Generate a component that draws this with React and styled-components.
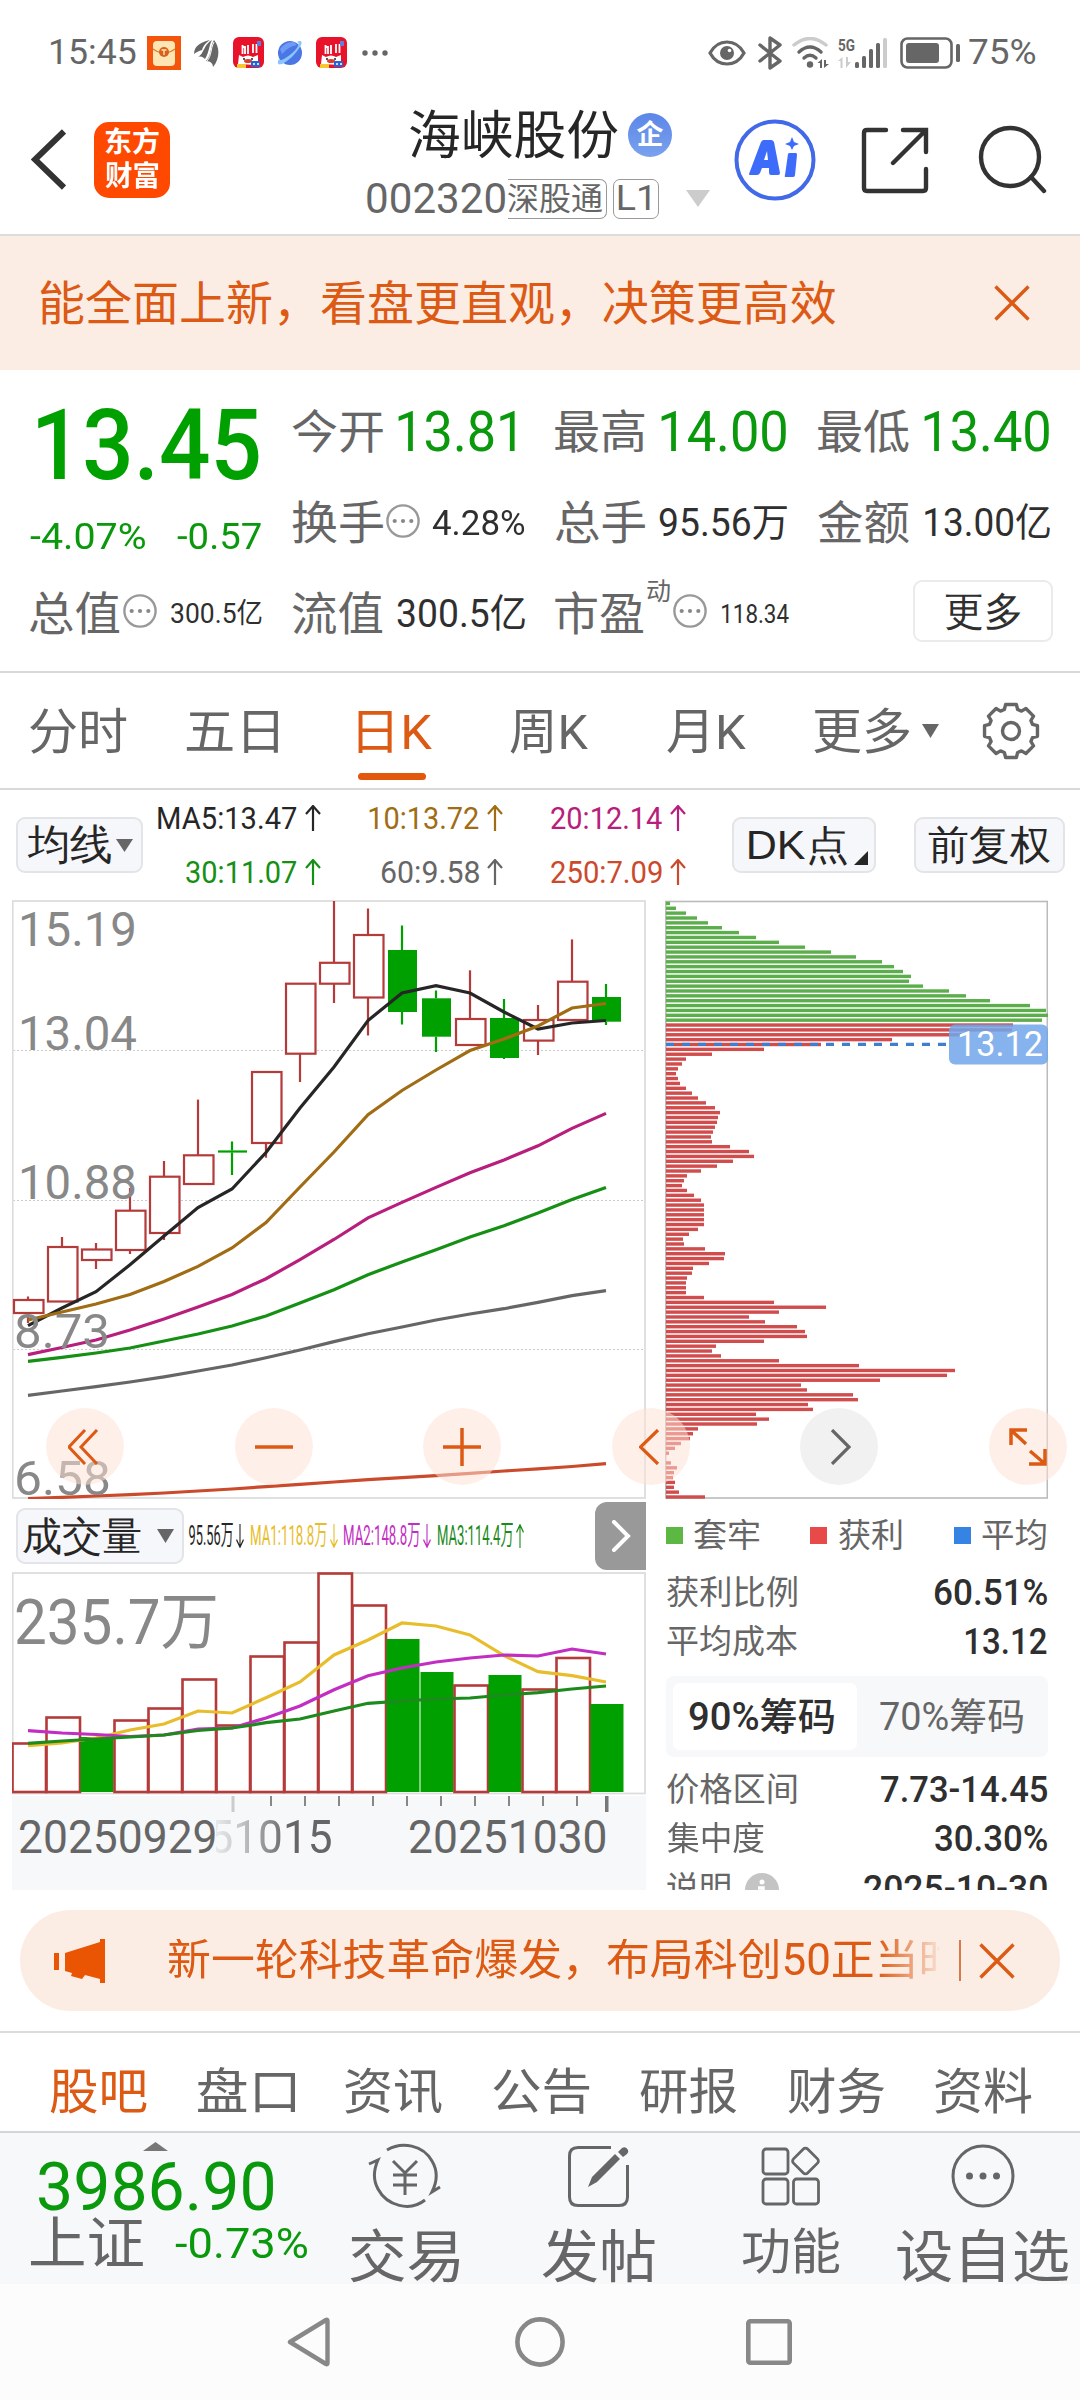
import React from 'react'
import styled, { createGlobalStyle } from 'styled-components'

const FONT = 'Roboto, "Noto Sans CJK SC", sans-serif'

const GREEN = '#0a980c'
const ORANGE = '#dc5a14'
const GRAY = '#666'
const DARK = '#2f2f2f'
const RED = '#b53a3a'

const GlobalStyle = createGlobalStyle`
  * {
    box-sizing: border-box;
  }

  body {
    margin: 0;
    background: #fff;
    font-family: ${FONT};
  }

  svg {
    display: block;
    flex: none;
  }
`

const ctx = document.createElement('canvas').getContext('2d')

const FitBox = styled.span`
  display: block;
  flex: none;
  width: ${props => props.$w}px;
  height: ${props => props.$size}px;
  margin-left: ${props => props.$ml || 0}px;
  margin-top: ${props => props.$mt || 0}px;
  font-size: ${props => props.$size}px;
  font-weight: ${props => props.$weight};
  line-height: ${props => props.$size}px;
  color: ${props => props.$color || GRAY};
  white-space: nowrap;
`

const FitText = styled.span`
  display: inline-block;
  transform-origin: 0 50%;
`

// One line of text squeezed so that its ink fills exactly w pixels
const Fit = ({ w, size, color, weight = 400, ml, mt, children }) => {
  ctx.font = `${weight} ${size}px ${FONT}`
  const m = ctx.measureText(children)
  const scale = w / (m.actualBoundingBoxLeft + m.actualBoundingBoxRight)
  const shift = m.actualBoundingBoxLeft * scale
  return (
    <FitBox $w={w} $size={size} $color={color} $weight={weight} $ml={ml} $mt={mt}>
      <FitText style={{ transform: `translateX(${shift}px) scaleX(${scale})` }}>
        {children}
      </FitText>
    </FitBox>
  )
}

const Screen = styled.div`
  width: 1080px;
  height: 2400px;
  display: flex;
  flex-direction: column;
  overflow: hidden;
  background: #fff;
`

const Row = styled.div`
  display: flex;
  align-items: center;
  flex: none;
  height: ${props => props.$h}px;
`

const Spot = styled.div`
  flex: none;
  margin-left: ${props => props.$ml || 0}px;
  margin-top: ${props => props.$mt || 0}px;
`

/* ---------- status bar ---------- */

const StatusBar = styled.header`
  display: flex;
  align-items: center;
  flex: none;
  height: 105px;
  padding-left: 50px;
`

const Envelope = () => (
  <svg width="34" height="34" viewBox="0 0 34 34">
    <rect width="34" height="34" fill="#f4550c" />
    <rect x="6" y="5" width="22" height="25" rx="4" fill="#fde6b4" />
    <path d="M6 13 Q17 21 28 13" fill="none" stroke="#d9791f" strokeWidth="1.4" />
    <circle cx="17" cy="16" r="5" fill="#d8611c" />
    <path d="M14.5 14h5M17 14v5" stroke="#fde6b4" strokeWidth="1.4" />
  </svg>
)

const Feather = () => (
  <svg width="25" height="28" viewBox="0 0 25 28" fill="#666">
    <path d="M0 15 C0 6 8 3 16 1 C11 4 9 8 8 11 C5 12 2 13 0 15 Z" />
    <path d="M4 18 C10 15 10 5 18 1 C15 6 15 14 11 20 C9 18 7 17 4 18 Z" />
    <path d="M12 22 C18 16 16 7 20 1 C26 8 26 20 19 28 C19 25 17 22 12 22 Z" />
    <path d="M20 3 C16 11 18 16 13 22" fill="none" stroke="#fff" strokeWidth="1" />
  </svg>
)

const SaleApp = () => (
  <svg width="31" height="31" viewBox="0 0 31 31">
    <rect width="31" height="31" rx="6" fill="#e8122a" />
    <path d="M9 10h3v7M9.500 8v9M15 8v9M20 7v9M23.500 7v9" fill="none" stroke="#fff" strokeWidth="1.8" />
    <rect x="24" y="4" width="4" height="5" fill="#5b7fe0" />
    <path d="M5 27 L6 18 L10 20 Q15 17 20 20 L25 18 L25 28 Z" fill="#fff" />
    <circle cx="11" cy="22" r="1" fill="#222" />
    <circle cx="19" cy="22" r="1" fill="#222" />
    <ellipse cx="15" cy="24" rx="4" ry="2" fill="#e03a2a" />
    <rect x="4" y="27" width="9" height="4" fill="#f9c531" />
    <rect x="18" y="24" width="9" height="6" fill="#2763d8" />
    <path d="M20 27h2M24 27h2" stroke="#fff" strokeWidth="1.5" />
  </svg>
)

const Planet = () => (
  <svg width="26" height="26" viewBox="0 0 26 26">
    <circle cx="13" cy="13" r="12" fill="#4a76e6" />
    <path d="M3 9 Q9 1 17 2 L20 5 Q12 6 5 14 Z" fill="#6f9af5" />
    <path
      d="M2 19 C-1 24 2 26 7 23 C14 19 21 11 24 5 C26 1 23 0 20 2 C24 3 20 9 14 14 C9 18 3 22 2 19 Z"
      fill="#8ac5fb"
    />
  </svg>
)

const Dots = () => (
  <svg width="26" height="8" viewBox="0 0 26 8" fill="#666">
    <circle cx="3" cy="4" r="2.7" />
    <circle cx="13" cy="4" r="2.7" />
    <circle cx="23" cy="4" r="2.7" />
  </svg>
)

const Eye = () => (
  <svg width="38" height="26" viewBox="0 0 38 26">
    <path
      d="M2 13 Q8 2 19 2 Q30 2 36 13 Q30 24 19 24 Q8 24 2 13 Z"
      fill="none"
      stroke="#666"
      strokeWidth="3.2"
    />
    <circle cx="19" cy="13" r="7" fill="#666" />
    <circle cx="21.5" cy="10.5" r="1.8" fill="#fff" />
  </svg>
)

const Bluetooth = () => (
  <svg width="25" height="34" viewBox="0 0 25 34">
    <path
      d="M2 9 L22 25 L12 32 V2 L22 9 L2 25"
      fill="none"
      stroke="#666"
      strokeWidth="3.4"
      strokeLinejoin="round"
      strokeLinecap="round"
    />
  </svg>
)

const Wifi = () => (
  <svg width="38" height="32" viewBox="0 0 38 32">
    <g fill="none" strokeWidth="3.4" strokeLinecap="round">
      <path d="M2 8 Q18 -5 34 8" stroke="#ccc" />
      <path d="M7 15 Q18 5 29 15" stroke="#666" />
      <path d="M12 21 Q18 15.5 24 21" stroke="#666" />
    </g>
    <circle cx="18" cy="27.5" r="3.2" fill="#666" />
    <path d="M25.5 26 L30 22 V31 H28 V26 Z M32 23 V31 L37 27 H34 V23 Z" fill="#666" />
  </svg>
)

const Signal = () => (
  <svg width="52" height="32" viewBox="0 0 52 32">
    <text x="1" y="13.5" fontSize="17" fontWeight="700" fill="#666" textLength="17" lengthAdjust="spacingAndGlyphs">
      5G
    </text>
    <path d="M1 24 L5.5 20 V31 H3.5 V24 Z M9 20 V31 L14 25 H11 V20 Z" fill="#ccc" />
    <g fill="#666">
      <rect x="18" y="25" width="4" height="6" rx="1.5" />
      <rect x="25" y="19" width="4" height="12" rx="1.5" />
      <rect x="32" y="12" width="4" height="19" rx="1.5" />
      <rect x="39" y="6" width="4" height="25" rx="1.5" />
    </g>
    <rect x="46" y="1" width="4" height="30" rx="1.5" fill="#ccc" />
  </svg>
)

const Battery = () => (
  <svg width="60" height="32" viewBox="0 0 60 32">
    <rect x="1.5" y="1.5" width="50" height="29" rx="6" fill="none" stroke="#666" strokeWidth="2.6" />
    <rect x="6" y="6" width="33" height="20" rx="3" fill="#666" />
    <rect x="56" y="7" width="4" height="18" rx="1.5" fill="#666" />
  </svg>
)

/* ---------- title bar ---------- */

const TitleBar = styled.header`
  display: flex;
  flex: none;
  height: 131px;
  border-bottom: 2px solid #dcdcdc;
`

const AppLogo = styled.div`
  width: 76px;
  height: 76px;
  margin: 17px 0 0 28px;
  padding-top: 7px;
  border-radius: 15px;
  background: #ff4800;
  flex: none;
  display: flex;
  flex-direction: column;
  align-items: center;
  gap: 6px;
`

const TitleBlock = styled.div`
  flex: none;
  width: 345px;
  margin-left: 197px;
`

const Badge = styled.div`
  width: 44px;
  height: 44px;
  margin-left: 10px;
  border-radius: 50%;
  background: linear-gradient(#5b86e8, #7aa2ee);
  display: flex;
  align-items: center;
  justify-content: center;
`

const Tag = styled.div`
  height: 40px;
  width: ${props => props.$w}px;
  margin-left: ${props => props.$ml}px;
  border: 1.5px solid #999;
  border-radius: ${props => (props.$open ? '0 7px 7px 0' : '7px')};
  border-left-width: ${props => (props.$open ? 0 : '1.5px')};
  display: flex;
  align-items: center;
  flex: none;
`

/* ---------- orange strip ---------- */

const Promo = styled.section`
  display: flex;
  align-items: center;
  flex: none;
  height: 134px;
  padding-left: 40px;
  background: #fcede4;
`

const Cross = () => (
  <svg width="36" height="36" viewBox="0 0 36 36">
    <path d="M1.5 1.5 L34.5 34.5 M34.5 1.5 L1.5 34.5" stroke={ORANGE} strokeWidth="3.4" />
  </svg>
)

/* ---------- quote ---------- */

const Quote = styled.section`
  display: grid;
  grid-template-columns: 263px 263px 263px 291px;
  grid-template-rows: 122px 91px 90px;
  flex: none;
  height: 303px;
  border-bottom: 2px solid #d8d8d8;
`

const PriceCell = styled.div`
  grid-row: 1 / 3;
  padding-left: 30px;
`

const Cell = styled.div`
  display: flex;
  padding-left: 29px;
  padding-top: ${props => props.$pt}px;
  height: ${props => props.$pt + 46}px;
  align-items: center;
`

const MoreButton = styled.button`
  width: 140px;
  height: 62px;
  margin-left: 124px;
  margin-top: -3px;
  padding: 0 0 0 31px;
  border: 2px solid #ebebeb;
  border-radius: 9px;
  background: #fff;
  display: flex;
  align-items: center;
`

const Info = () => (
  <svg width="34" height="34" viewBox="0 0 34 34">
    <circle cx="17" cy="17" r="15.6" fill="none" stroke="#999" strokeWidth="2.4" />
    <g fill="#888">
      <circle cx="8.7" cy="17" r="2.1" />
      <circle cx="17" cy="17" r="2.1" />
      <circle cx="25.3" cy="17" r="2.1" />
    </g>
  </svg>
)

/* ---------- period tabs ---------- */

const PeriodTabs = styled.nav`
  display: flex;
  flex: none;
  height: 117px;
  padding: 35px 0 0 30px;
  border-bottom: 2px solid #d8d8d8;
`

const PeriodTab = styled.div`
  flex: none;
  margin-left: ${props => props.$ml || 0}px;

  &::after {
    content: '';
    display: block;
    width: 68px;
    height: 7px;
    margin-top: 16px;
    border-radius: 4px;
    background: ${props => (props.$active ? '#e2570b' : 'transparent')};
  }
`

const Caret = ({ w = 17, h = 13, color = '#666' }) => (
  <svg width={w} height={h} viewBox="0 0 17 13" preserveAspectRatio="none">
    <path d="M0 0 H17 L8.5 13 Z" fill={color} />
  </svg>
)

const Gear = () => {
  const teeth = []
  for (let i = 0; i < 8; i++) {
    const a = (i * Math.PI) / 4
    ;[[-0.3, 22.5], [-0.2, 27], [0.2, 27], [0.3, 22.5]].forEach(([d, r]) => {
      teeth.push(`${29 + r * Math.sin(a + d)},${29 - r * Math.cos(a + d)}`)
    })
  }
  return (
    <svg width="58" height="58" viewBox="0 0 58 58" fill="none" stroke="#666" strokeWidth="3.4">
      <polygon points={teeth.join(' ')} strokeLinejoin="round" />
      <circle cx="29" cy="29" r="8.5" />
    </svg>
  )
}

/* ---------- indicators ---------- */

const Indicators = styled.section`
  display: flex;
  flex: none;
  height: 110px;
  padding-left: 16px;
`

const Chip = styled.button`
  display: flex;
  align-items: center;
  flex: none;
  width: ${props => props.$w}px;
  height: 56px;
  margin: ${props => props.$mt}px 0 0 ${props => props.$ml || 0}px;
  padding: 0 0 0 ${props => props.$pl}px;
  border: 2px solid #e3e4e8;
  border-radius: 9px;
  background: #f6f7fa;
`

const MaGrid = styled.div`
  display: grid;
  grid-template-columns: 163px 182px 200px;
  grid-template-rows: 54px 54px;
  width: 545px;
  margin-left: 15px;
  padding-top: 1px;
`

const MaCell = styled.div`
  display: flex;
  align-items: center;
  justify-content: flex-end;
  padding-right: ${props => props.$pr}px;
  gap: 8px;
`

const Arrow = ({ down, color, w = 16, h = 26 }) => (
  <svg width={w} height={h} viewBox="0 0 16 26" preserveAspectRatio="none">
    <path
      d={down ? 'M8 0 V25 M1 17 L8 25 L15 17' : 'M8 26 V1 M1 9 L8 1 L15 9'}
      fill="none"
      stroke={color}
      strokeWidth="2.2"
    />
  </svg>
)

const averages = [
  { text: 'MA5:13.47', w: 139, color: '#262626', pr: 0 },
  { text: '10:13.72', w: 110, color: '#a06c14', pr: 0 },
  { text: '20:12.14', w: 111, color: '#b81e7c', pr: 17 },
  { text: '30:11.07', w: 111, color: '#159015', pr: 0 },
  { text: '60:9.58', w: 97, color: '#666', pr: 0 },
  { text: '250:7.09', w: 111, color: '#cc4a2c', pr: 17 }
]

/* ---------- charts ---------- */

const ChartArea = styled.section`
  position: relative;
  display: flex;
  flex: none;
  height: 990px;
  padding-left: 12px;
  overflow: hidden;
`

const LeftPane = styled.div`
  width: 634px;
  flex: none;
`

const RightPane = styled.div`
  width: 383px;
  margin-left: 19px;
  flex: none;
`

const Controls = styled.div`
  position: absolute;
  left: 46px;
  top: 508px;
  width: 1021px;
  display: flex;
  justify-content: space-between;
`

const RoundButton = styled.div`
  width: 78px;
  height: 77px;
  border-radius: 50%;
  background: ${props => (props.$gray ? 'rgba(238,238,238,.8)' : 'rgba(253,226,212,.52)')};
  display: flex;
  align-items: center;
  justify-content: center;
`

const STEP = 34
const xs = Array.from({ length: 18 }, (_, i) => 28 + i * STEP)

// [up, high, top, bottom, low]
const candles = [
  [1, 1296.5, 1300, 1313, 1323],
  [1, 1237, 1247, 1301.5, 1301.5],
  [1, 1243, 1249.5, 1260, 1269],
  [1, 1188, 1210.7, 1250, 1254],
  [1, 1161, 1176.7, 1233, 1240],
  [1, 1099.6, 1155.3, 1184, 1184],
  [0, 1141.5, 1150.4, 1152.6, 1175],
  [1, 1072, 1072, 1143, 1157.7],
  [1, 983.7, 983.7, 1053.7, 1082],
  [1, 901, 962.8, 983.7, 1003],
  [1, 908.6, 935, 997.5, 1035.5],
  [0, 925.6, 950, 1012, 1024.4],
  [0, 990.4, 998.3, 1036.7, 1052],
  [1, 970.3, 1019, 1045, 1045],
  [0, 999, 1018, 1058, 1059],
  [1, 1005, 1020, 1040.6, 1055],
  [1, 939.4, 981.7, 1020, 1020],
  [0, 984, 997, 1021.7, 1025]
]

const priceLines = [
  ['#666', [1395.3, 1391, 1386.6, 1382, 1376.8, 1371, 1365, 1357.8, 1350, 1341.6, 1333.7, 1327, 1320, 1314, 1308.7, 1302.4, 1295.7, 1290.6]],
  ['#cc4a2c', [1498.5, 1497.4, 1496, 1494.6, 1493, 1491, 1489, 1486.6, 1484.3, 1482, 1479.6, 1477.6, 1475.6, 1473.4, 1471, 1468.8, 1466.5, 1463.7]],
  ['#159015', [1361.3, 1357.4, 1353, 1348, 1341, 1334, 1326, 1316, 1303, 1289.8, 1274.7, 1262, 1249.8, 1237, 1225.7, 1213, 1199.6, 1187.4]],
  ['#b81e7c', [1354.6, 1347.5, 1340, 1330, 1319, 1307, 1294.5, 1278.7, 1259.7, 1239.5, 1217.8, 1202.4, 1187.4, 1172.7, 1160, 1145.8, 1128.4, 1113.4]],
  ['#262626', [1325.7, 1308, 1291.7, 1264.8, 1236, 1207.5, 1189, 1152.5, 1108, 1067, 1020.5, 993, 985.7, 993, 1012, 1029, 1023, 1020.5]],
  ['#a06c14', [1320, 1312, 1304, 1294.5, 1281.5, 1266.4, 1248, 1222.5, 1187, 1152, 1114.6, 1090.5, 1070, 1050.5, 1039, 1026, 1008, 1003.5]]
]

const priceLabels = [
  ['15.19', 18, 946, 116],
  ['13.04', 18, 1049.5, 116],
  ['10.88', 18, 1199, 116],
  ['8.73', 14, 1348, 93],
  ['6.58', 14, 1494.5, 94]
]

const points = ys => ys.map((y, i) => `${xs[i]},${y}`).join(' ')

const PriceChart = () => (
  <svg width="634" height="599" viewBox="12 900 634 599">
    <g stroke="#ccc" strokeDasharray="2 2">
      <path d="M13 1050.5H645M13 1200.5H645M13 1349.5H645" />
    </g>
    <rect x="12.7" y="901" width="632.3" height="597" fill="none" stroke="#ddd" strokeWidth="1.8" />
    {candles.map(([up, high, top, bottom, low], i) => {
      const color = up ? RED : '#00a000'
      return (
        <g key={i} stroke={color} strokeWidth="2.2">
          <path d={`M${xs[i]} ${high}V${top}M${xs[i]} ${bottom}V${low}`} />
          {up ? (
            <rect x={xs[i] - 14} y={top} width="29.5" height={bottom - top} fill="#fff" />
          ) : (
            <rect x={xs[i] - 14} y={top} width="29" height={bottom - top} fill={color} stroke="none" />
          )}
        </g>
      )
    })}
    {priceLines.map(([color, ys]) => (
      <polyline key={color} points={points(ys)} fill="none" stroke={color} strokeWidth="3.2" />
    ))}
    {priceLabels.map(([text, x, y, w]) => (
      <text key={text} x={x} y={y} fontSize="48.5" fill="#888" textLength={w + 3} lengthAdjust="spacingAndGlyphs">
        {text}
      </text>
    ))}
  </svg>
)

// [up, top]
const volumes = [
  [1, 1743], [1, 1717], [0, 1737], [1, 1720], [1, 1708], [1, 1679],
  [1, 1725], [1, 1656], [1, 1642], [1, 1573], [1, 1605], [0, 1639],
  [0, 1672], [1, 1685], [0, 1675], [1, 1689], [1, 1657.5], [0, 1704]
]

const volumeLines = [
  ['#e8bd2b', [1745.7, 1743, 1738, 1730, 1724, 1711, 1713, 1697.7, 1682, 1655, 1640, 1623, 1626, 1635, 1655.7, 1671.7, 1675.7, 1682]],
  ['#c22ec2', [1730.7, 1733, 1734.5, 1736.5, 1735, 1729, 1728, 1718, 1706, 1689.7, 1675.7, 1668, 1662, 1658, 1655, 1656, 1649, 1654]],
  ['#1d8a1d', [1743.3, 1741, 1739, 1737, 1735, 1730.5, 1728, 1722.7, 1719, 1711, 1703.3, 1701, 1699, 1698, 1695, 1692.7, 1689, 1686]]
]

const VolumeChart = () => (
  <svg width="634" height="224" viewBox="12 1572 634 224">
    <rect x="12.7" y="1573" width="632.3" height="220.5" fill="none" stroke="#ddd" strokeWidth="1.8" />
    <text x="14" y="1643.5" fontSize="62.5" fill="#888" textLength="205" lengthAdjust="spacingAndGlyphs">
      235.7万
    </text>
    {volumes.map(([up, top], i) =>
      up ? (
        <rect
          key={i}
          x={12.5 + i * STEP}
          y={top + 0.5}
          width="33.5"
          height={1791.5 - top}
          fill="none"
          stroke={RED}
          strokeWidth="2.6"
        />
      ) : (
        <rect key={i} x={12.5 + i * STEP} y={top} width="33" height={1792 - top} fill="#00a000" />
      )
    )}
    {volumeLines.map(([color, ys]) => (
      <polyline key={color} points={points(ys)} fill="none" stroke={color} strokeWidth="3.2" />
    ))}
  </svg>
)

const volumeMas = [
  { text: '95.56万', w: 44, color: '#262626', down: true, ml: 5 },
  { text: 'MA1:118.8万', w: 76, color: '#e8bd2b', down: true, ml: 7 },
  { text: 'MA2:148.8万', w: 76, color: '#c22ec2', down: true, ml: 6 },
  { text: 'MA3:114.4万', w: 75, color: '#1d8a1d', down: false, ml: 7 }
]

const VolumeBar = styled.div`
  display: flex;
  align-items: center;
  height: 73px;
`

const FoldButton = styled.div`
  width: 51px;
  height: 68px;
  margin-left: auto;
  border-radius: 12px 0 0 12px;
  background: #999;
  display: flex;
  align-items: center;
  justify-content: center;
`

const Axis = styled.div`
  height: 94px;
  background: #f7f8fa;
`

const Dates = styled.div`
  display: flex;
  padding: 1px 0 0 8px;
`

// second date starts underneath the first one and fades in
const FadingDate = styled.div`
  display: flex;
  justify-content: flex-end;
  width: 115px;
  margin-left: 1px;
  overflow: hidden;
  mask-image: linear-gradient(to right, rgba(0, 0, 0, 0.1), rgba(0, 0, 0, 0.35) 22%, #000 62%);
`

const Ticks = () => (
  <svg width="634" height="18" viewBox="12 1796 634 18">
    <rect x="231.5" y="1796" width="3" height="16" fill="#ccc" />
    {xs.slice(7, 17).map(x => (
      <rect key={x} x={x + 4} y="1796" width="2" height="10" fill="#888" />
    ))}
    <rect x="605" y="1796" width="3.5" height="16" fill="#777" />
  </svg>
)

const trapped = [
  4, 10, 20, 31, 42, 56, 73, 90, 113, 139, 165, 190, 216, 228, 237, 245, 243, 257, 283, 300, 324, 364, 380,
  382, 376
]

const profit = [
  347, 346, 296, 226, 155, 98, 46, 20, 16, 12, 10, 12, 14, 20, 26, 32, 40, 49, 54, 52, 51, 49, 47, 45, 46, 64,
  83, 88, 67, 51, 35, 21, 18, 16, 21, 28, 35, 38, 38, 38, 38, 38, 32, 23, 17, 18, 39, 59, 58, 43, 27, 26, 21,
  20, 20, 20, 38, 108, 160, 113, 83, 99, 131, 139, 141, 98, 50, 46, 55, 113, 193, 289, 281, 214, 135, 141,
  187, 192, 142, 147, 90, 103, 91, 32, 27, 24, 15, 9, 3, 0, 5, 11, 8, 7, 9, 8, 13, 39
]

const ChipChart = () => {
  const all = trapped.concat(profit)
  const gap = 593.6 / (all.length - 1)
  return (
    <svg width="383" height="599" viewBox="665 900 383 599">
      <rect x="665.7" y="901.5" width="381.6" height="596.5" fill="none" stroke="#bbb" strokeWidth="1.6" />
      {all.map((w, i) => (
        <rect
          key={i}
          x="666"
          y={903.4 + i * gap - 1.7}
          width={w}
          height="3.4"
          fill={i < trapped.length ? '#5cae4c' : '#d14c4c'}
        />
      ))}
      <path d="M666 1044.4H948" stroke="#3f7fcf" strokeWidth="3.2" strokeDasharray="8 8" />
      <rect x="949" y="1024.5" width="99" height="40" rx="6" fill="#72a6ea" fillOpacity=".86" />
      <text x="957" y="1055.5" fontSize="35" fill="#fff" textLength="86" lengthAdjust="spacingAndGlyphs">
        13.12
      </text>
    </svg>
  )
}

const Legend = styled.div`
  display: flex;
  align-items: center;
  height: 69px;
  padding-top: 4px;
`

const Square = styled.i`
  width: 17px;
  height: 17px;
  flex: none;
  margin-left: ${props => props.$ml || 0}px;
  background: ${props => props.$color};
`

const StatRow = styled.div`
  display: flex;
  align-items: center;
  justify-content: space-between;
  height: 49px;
  padding: 0 1px 0 2px;
`

const Segment = styled.div`
  display: flex;
  align-items: center;
  height: 81px;
  width: 382px;
  margin: 10px 0 8px 1px;
  padding-left: 7px;
  border-radius: 8px;
  background: #f7f8fa;
`

const SegmentActive = styled.div`
  width: 184px;
  height: 67px;
  padding-left: 16px;
  border-radius: 7px;
  background: #fff;
  display: flex;
  align-items: center;
`

/* ---------- news strip ---------- */

const Notice = styled.section`
  display: flex;
  align-items: center;
  flex: none;
  width: 1040px;
  height: 101px;
  margin: 20px 0 20px 20px;
  padding-left: 34px;
  border-radius: 51px;
  background: #fcede4;
`

const NoticeText = styled.div`
  width: 771px;
  margin-left: 62px;
  overflow: hidden;
  mask-image: linear-gradient(to right, #000 92%, rgba(0, 0, 0, 0.1));
`

const Divider = styled.i`
  width: 1.5px;
  height: 41px;
  margin: 0 18.5px 0 20px;
  background: #d87a48;
`

/* ---------- bottom ---------- */

const InfoTabs = styled.nav`
  display: flex;
  align-items: center;
  flex: none;
  gap: 50.5px;
  height: 102px;
  padding: 20px 0 0 50px;
  border-top: 2px solid #dadcde;
  border-bottom: 2px solid #d3d6d9;
`

const BottomBar = styled.footer`
  display: flex;
  flex: none;
  height: 151px;
  background: #f6f8fa;
`

const IndexBlock = styled.div`
  width: 309px;
  flex: none;
  padding: 9px 0 0 30px;
`

const Action = styled.div`
  width: 192.7px;
  flex: none;
  display: flex;
  flex-direction: column;
  align-items: center;
  padding-top: 9px;
`

const SystemNav = styled.footer`
  display: flex;
  align-items: center;
  flex: none;
  height: 116px;
  padding-left: 287px;
  background: #fcfcfc;
`

const TradeIcon = () => (
  <svg width="74" height="68" viewBox="0 0 74 68" fill="none" stroke="#666" strokeWidth="3">
    <path d="M19 8 C34 -1 55 3 64 19 C70 29 69 40 64 50 L72 45" />
    <path d="M57 58 C42 70 19 64 10 47 C5 38 6 27 10 18 L1 22" />
    <path d="M25 19 L37 31 L49 19 M25 33 H49 M25 43 H49 M37 31 V53" />
  </svg>
)

const PostIcon = () => (
  <svg width="61" height="68" viewBox="0 0 61 68">
    <path
      d="M43 5.5 H10 Q1.5 5.5 1.5 14 V55 Q1.5 63.500 10 63.500 H51 Q59.500 63.500 59.500 55 V23"
      fill="none"
      stroke="#666"
      strokeWidth="3"
    />
    <path d="M20 45 L24 35 L47 12 L52 17 L29 40 Z" fill="#666" />
    <path d="M50 10 L54 6 Q58 4 60 8 Q61 10 59 12 L55 15 Z" fill="#666" />
  </svg>
)

const FunctionIcon = () => (
  <svg width="60" height="68" viewBox="0 0 60 68" fill="none" stroke="#666" strokeWidth="2.8">
    <rect x="2" y="7" width="25" height="25" rx="3" />
    <rect x="2" y="37" width="25" height="25" rx="3" />
    <rect x="32.500" y="37" width="25" height="25" rx="3" />
    <rect x="34.500" y="9" width="20" height="20" rx="3" transform="rotate(45 44.500 19)" />
  </svg>
)

const AddIcon = () => (
  <svg width="64" height="68" viewBox="0 0 64 68">
    <circle cx="32" cy="34" r="30" fill="none" stroke="#666" strokeWidth="3" />
    <g fill="#666">
      <circle cx="18.500" cy="34" r="3.500" />
      <circle cx="32" cy="34" r="3.500" />
      <circle cx="45.500" cy="34" r="3.500" />
    </g>
  </svg>
)

const infoTabs = ['股吧', '盘口', '资讯', '公告', '研报', '财务', '资料']

export default () => {
  return (
    <Screen>
      <GlobalStyle />
      <StatusBar>
        <Fit w={86} size={35}>15:45</Fit>
        <Spot $ml={11}><Envelope /></Spot>
        <Spot $ml={13}><Feather /></Spot>
        <Spot $ml={14}><SaleApp /></Spot>
        <Spot $ml={13}><Planet /></Spot>
        <Spot $ml={13}><SaleApp /></Spot>
        <Spot $ml={15}><Dots /></Spot>
        <Spot $ml={320}><Eye /></Spot>
        <Spot $ml={12}><Bluetooth /></Spot>
        <Spot $ml={9}><Wifi /></Spot>
        <Spot $ml={7}><Signal /></Spot>
        <Spot $ml={11}><Battery /></Spot>
        <Fit w={67} size={35} ml={9}>75%</Fit>
      </StatusBar>

      <TitleBar>
        <Spot $ml={31} $mt={24}>
          <svg width="35" height="61" viewBox="0 0 35 61">
            <path d="M33 2.500 L4 30.500 L33 58.500" fill="none" stroke="#333" strokeWidth="6" />
          </svg>
        </Spot>
        <AppLogo>
          <Fit w={54} size={28} color="#fff" weight={700}>东方</Fit>
          <Fit w={54} size={28} color="#fff" weight={700}>财富</Fit>
        </AppLogo>
        <TitleBlock>
          <Row $h={60}>
            <Fit w={208} size={52} color="#262626" ml={43} mt={3}>海峡股份</Fit>
            <Badge>
              <Fit w={27} size={27} color="#fff" weight={700}>企</Fit>
            </Badge>
          </Row>
          <Row $h={67}>
            <Fit w={138} size={43} mt={-1}>002320</Fit>
            <Tag $w={99} $ml={3} $open>
              <Fit w={94} size={32}>深股通</Fit>
            </Tag>
            <Tag $w={46} $ml={6}>
              <Fit w={32} size={35} ml={4}>L1</Fit>
            </Tag>
            <Spot $ml={27}><Caret w={24} h={17} color="#ccc" /></Spot>
          </Row>
        </TitleBlock>
        <Spot $ml={22} $mt={13}>
          <svg width="82" height="84" viewBox="0 0 82 84">
            <circle cx="41" cy="42" r="38.500" fill="none" stroke="#4169e8" strokeWidth="4" />
            <path
              fillRule="evenodd"
              d="M15 56 L27 24 Q28 22 30 22 H37 Q39 22 40 24 L46 55 Q46 57 44 57 H37 Q35 57 35 54 V50 H28 L26 55 Q25 57 23 57 H16 Q15 57 15 56 Z M30 42 H34 L33 33 Z"
              fill="#3d6bfa"
            />
            <path d="M54 36 Q54 35 56 35 H62 Q63 35 63 37 L61 57 Q61 59 59 59 H52 Q50 59 51 57 Z" fill="#3d6bfa" />
            <path d="M58 19 L60 24 L65 26 L60 28 L58 32 L56 28 L51 26 L56 24 Z" fill="#3d6bfa" />
          </svg>
        </Spot>
        <Spot $ml={45} $mt={21}>
          <svg width="68" height="68" viewBox="0 0 68 68" fill="none" stroke="#333" strokeWidth="4.400" strokeLinecap="round">
            <path d="M25 4 H6 Q3 4 3 7 V62 Q3 65 6 65 H62 Q65 65 65 62 V43" />
            <path d="M42 4 H65 V26 M65 4 L32 37" />
          </svg>
        </Spot>
        <Spot $ml={49} $mt={19}>
          <svg width="70" height="70" viewBox="0 0 70 70" fill="none" stroke="#333" strokeWidth="4.400" strokeLinecap="round">
            <circle cx="32" cy="33" r="29" />
            <path d="M53 53 L66 67" />
          </svg>
        </Spot>
      </TitleBar>

      <Promo>
        <Fit w={796} size={46.8} color={ORANGE} mt={3}>能全面上新，看盘更直观，决策更高效</Fit>
        <Spot $ml={158}><Cross /></Spot>
      </Promo>

      <Quote>
        <PriceCell>
          <Row $h={149}>
            <Fit w={221} size={99} color="#00a000" weight={500} ml={8} mt={2}>13.45</Fit>
          </Row>
          <Row $h={36}>
            <Fit w={115} size={36} color={GREEN}>-4.07%</Fit>
            <Fit w={84} size={36} color={GREEN} ml={32}>-0.57</Fit>
          </Row>
        </PriceCell>
        <Cell $pt={39}>
          <Fit w={91} size={46}>今开</Fit>
          <Fit w={117} size={55} color={GREEN} ml={15}>13.81</Fit>
        </Cell>
        <Cell $pt={39}>
          <Fit w={90} size={46}>最高</Fit>
          <Fit w={125} size={55} color={GREEN} ml={16}>14.00</Fit>
        </Cell>
        <Cell $pt={39}>
          <Fit w={91} size={46}>最低</Fit>
          <Fit w={125} size={55} color={GREEN} ml={15}>13.40</Fit>
        </Cell>
        <Cell $pt={8}>
          <Fit w={91} size={46}>换手</Fit>
          <Spot $ml={3} $mt={-4}><Info /></Spot>
          <Fit w={93} size={35} color={DARK} ml={12}>4.28%</Fit>
        </Cell>
        <Cell $pt={8}>
          <Fit w={90} size={46}>总手</Fit>
          <Fit w={128} size={39} color={DARK} ml={14}>95.56万</Fit>
        </Cell>
        <Cell $pt={8}>
          <Fit w={91} size={46}>金额</Fit>
          <Fit w={125} size={39} color={DARK} ml={16}>13.00亿</Fit>
        </Cell>
        <Cell $pt={8}>
          <Fit w={91} size={46}>总值</Fit>
          <Spot $ml={3} $mt={-6}><Info /></Spot>
          <Fit w={91} size={28} color={DARK} ml={14}>300.5亿</Fit>
        </Cell>
        <Cell $pt={8}>
          <Fit w={91} size={46}>流值</Fit>
          <Fit w={128} size={39} color={DARK} ml={14}>300.5亿</Fit>
        </Cell>
        <Cell $pt={8}>
          <Fit w={88} size={46}>市盈</Fit>
          <Fit w={23} size={25} ml={4} mt={-46}>动</Fit>
          <Spot $ml={3} $mt={-6}><Info /></Spot>
          <Fit w={67} size={25} color={DARK} ml={15}>118.34</Fit>
        </Cell>
        <div>
          <MoreButton>
            <Fit w={77} size={40} color={DARK} ml={-1}>更多</Fit>
          </MoreButton>
        </div>
      </Quote>

      <PeriodTabs>
        <PeriodTab><Fit w={97} size={49}>分时</Fit></PeriodTab>
        <PeriodTab $ml={59}><Fit w={92} size={49}>五日</Fit></PeriodTab>
        <PeriodTab $ml={80} $active><Fit w={74} size={49} color={ORANGE}>日K</Fit></PeriodTab>
        <PeriodTab $ml={78}><Fit w={78} size={49}>周K</Fit></PeriodTab>
        <PeriodTab $ml={79}><Fit w={79} size={49}>月K</Fit></PeriodTab>
        <PeriodTab $ml={68}><Fit w={96} size={49}>更多</Fit></PeriodTab>
        <Spot $ml={12} $mt={16}><Caret w={17} h={14} /></Spot>
        <Spot $ml={43} $mt={-6}><Gear /></Spot>
      </PeriodTabs>

      <Indicators>
        <Chip $w={127} $mt={27} $pl={11}>
          <Fit w={83} size={42} color="#262626">均线</Fit>
          <Spot $ml={4}><Caret /></Spot>
        </Chip>
        <MaGrid>
          {averages.map(({ text, w, color, pr }) => (
            <MaCell key={text} $pr={pr}>
              <Fit w={w} size={31} color={color}>{text}</Fit>
              <Arrow color={color} />
            </MaCell>
          ))}
        </MaGrid>
        <Chip $w={144} $mt={27} $ml={29} $pl={15}>
          <Fit w={94} size={40} color="#262626">DK点</Fit>
          <Spot $ml={11} $mt={26}>
            <svg width="14" height="14" viewBox="0 0 14 14">
              <path d="M14 0 V14 H0 Z" fill="#262626" />
            </svg>
          </Spot>
        </Chip>
        <Chip $w={151} $mt={27} $ml={38} $pl={14}>
          <Fit w={120} size={41} color="#262626">前复权</Fit>
        </Chip>
      </Indicators>

      <ChartArea>
        <LeftPane>
          <PriceChart />
          <VolumeBar>
            <Chip $w={168} $mt={0} $ml={4} $pl={5}>
              <Fit w={118} size={40} color="#262626">成交量</Fit>
              <Spot $ml={16}><Caret w={17} h={14} /></Spot>
            </Chip>
            {volumeMas.map(({ text, w, color, down, ml }) => (
              <React.Fragment key={text}>
                <Fit w={w} size={28} color={color} ml={ml}>{text}</Fit>
                <Spot $ml={3}><Arrow color={color} down={down} w={8} h={24} /></Spot>
              </React.Fragment>
            ))}
            <FoldButton>
              <svg width="20" height="32" viewBox="0 0 20 32">
                <path d="M3 2 L17 16 L3 30" fill="none" stroke="#fff" strokeWidth="4" strokeLinecap="round" />
              </svg>
            </FoldButton>
          </VolumeBar>
          <VolumeChart />
          <Axis>
            <Ticks />
            <Dates>
              <Fit w={195} size={45.500}>20250929</Fit>
              <FadingDate>
                <Fit w={195} size={45.500}>20251015</Fit>
              </FadingDate>
              <Fit w={195} size={45.500} ml={79}>20251030</Fit>
            </Dates>
          </Axis>
        </LeftPane>

        <RightPane>
          <ChipChart />
          <Legend>
            <Square $color="#5cb843" $ml={1} />
            <Fit w={65} size={33} ml={11}>套牢</Fit>
            <Square $color="#e84a4a" $ml={51} />
            <Fit w={63} size={33} ml={12}>获利</Fit>
            <Square $color="#3583e3" $ml={52} />
            <Fit w={64} size={33} ml={11}>平均</Fit>
          </Legend>
          <StatRow>
            <Fit w={130} size={33}>获利比例</Fit>
            <Fit w={112} size={36} color={DARK} weight={500}>60.51%</Fit>
          </StatRow>
          <StatRow>
            <Fit w={130} size={33}>平均成本</Fit>
            <Fit w={82} size={36} color={DARK} weight={500}>13.12</Fit>
          </StatRow>
          <Segment>
            <SegmentActive>
              <Fit w={145} size={38} color={DARK} weight={500}>90%筹码</Fit>
            </SegmentActive>
            <Fit w={143} size={38} ml={23}>70%筹码</Fit>
          </Segment>
          <StatRow>
            <Fit w={130} size={33}>价格区间</Fit>
            <Fit w={166} size={36} color={DARK} weight={500}>7.73-14.45</Fit>
          </StatRow>
          <StatRow>
            <Fit w={97} size={33}>集中度</Fit>
            <Fit w={112} size={36} color={DARK} weight={500}>30.30%</Fit>
          </StatRow>
          <StatRow>
            <Fit w={63} size={33} mt={2}>说明</Fit>
            <Spot $ml={-70} $mt={4}>
              <svg width="34" height="34" viewBox="0 0 34 34">
                <circle cx="17" cy="17" r="17" fill="#c4c4c4" />
                <circle cx="17" cy="9" r="2.500" fill="#fff" />
                <path d="M13 15 H18 V26" fill="none" stroke="#fff" strokeWidth="3.500" />
              </svg>
            </Spot>
            <Fit w={183} size={36} color={DARK} weight={500} mt={2}>2025-10-30</Fit>
          </StatRow>
        </RightPane>

        <Controls>
          <RoundButton>
            <svg width="34" height="36" viewBox="0 0 34 36" fill="none" stroke={ORANGE} strokeWidth="3">
              <path d="M17 1 L1 18 L17 35 M29 1 L13 18 L29 35" />
            </svg>
          </RoundButton>
          <RoundButton>
            <svg width="38" height="38" viewBox="0 0 38 38" stroke={ORANGE} strokeWidth="3.500">
              <path d="M0 19 H38" />
            </svg>
          </RoundButton>
          <RoundButton>
            <svg width="38" height="38" viewBox="0 0 38 38" stroke={ORANGE} strokeWidth="3.500">
              <path d="M0 19 H38 M19 0 V38" />
            </svg>
          </RoundButton>
          <RoundButton>
            <svg width="24" height="36" viewBox="0 0 24 36" fill="none" stroke={ORANGE} strokeWidth="3.200">
              <path d="M19 1 L1.500 18 L19 35" />
            </svg>
          </RoundButton>
          <RoundButton $gray>
            <svg width="24" height="36" viewBox="0 0 24 36" fill="none" stroke="#666" strokeWidth="3.200">
              <path d="M5 1 L22 18 L5 35" />
            </svg>
          </RoundButton>
          <RoundButton>
            <svg width="40" height="40" viewBox="0 0 40 40" fill="none" stroke={ORANGE} strokeWidth="3.500">
              <path d="M19 3 H3 V18 M4 4 L18 17 M37 22 V37 H21 M22 24 L36 36" />
            </svg>
          </RoundButton>
        </Controls>
      </ChartArea>

      <Notice>
        <svg width="52" height="46" viewBox="0 0 52 46" fill="#ea5504">
          <rect x="0" y="15" width="5" height="17" />
          <path d="M11 15 L46 4 V1 H51 V45 H46 V41 L31 37 L28 41 L17 38 L18 35 L11 33 Z" />
        </svg>
        <NoticeText>
          <Fit w={793} size={43.500} color={ORANGE}>新一轮科技革命爆发，布局科创50正当时</Fit>
        </NoticeText>
        <Divider />
        <Cross />
      </Notice>

      <InfoTabs>
        {infoTabs.map((name, i) => (
          <Fit key={name} w={97} size={49} color={i === 0 ? ORANGE : GRAY}>{name}</Fit>
        ))}
      </InfoTabs>

      <BottomBar>
        <IndexBlock>
          <Spot $ml={113}>
            <svg width="25" height="9" viewBox="0 0 25 9">
              <path d="M0 9 L12.500 0 L25 9 Z" fill="#777" />
            </svg>
          </Spot>
          <Fit w={234} size={67} color={GREEN} ml={9} mt={3}>3986.90</Fit>
          <Row $h={52}>
            <Fit w={113} size={56} mt={-6}>上证</Fit>
            <Fit w={132} size={42} color={GREEN} ml={32} mt={-6}>-0.73%</Fit>
          </Row>
        </IndexBlock>
        <Action>
          <TradeIcon />
          <Fit w={110} size={57} mt={19}>交易</Fit>
        </Action>
        <Action>
          <PostIcon />
          <Fit w={113} size={57} mt={19}>发帖</Fit>
        </Action>
        <Action>
          <FunctionIcon />
          <Fit w={98} size={49} mt={18}>功能</Fit>
        </Action>
        <Action>
          <AddIcon />
          <Fit w={172} size={57} mt={19}>设自选</Fit>
        </Action>
      </BottomBar>

      <SystemNav>
        <svg width="43" height="50" viewBox="0 0 43 50">
          <path d="M3 25 L39 3 Q40.500 2 40.500 4 V46 Q40.500 48 39 47 Z" fill="none" stroke="#888" strokeWidth="4.400" strokeLinejoin="round" />
        </svg>
        <Spot $ml={185}>
          <svg width="50" height="50" viewBox="0 0 50 50">
            <circle cx="25" cy="25" r="22.600" fill="none" stroke="#888" strokeWidth="4.600" />
          </svg>
        </Spot>
        <Spot $ml={181}>
          <svg width="46" height="46" viewBox="0 0 46 46">
            <rect x="2.300" y="2.300" width="41.400" height="41.400" rx="2" fill="none" stroke="#888" strokeWidth="4.600" />
          </svg>
        </Spot>
      </SystemNav>
    </Screen>
  )
}
